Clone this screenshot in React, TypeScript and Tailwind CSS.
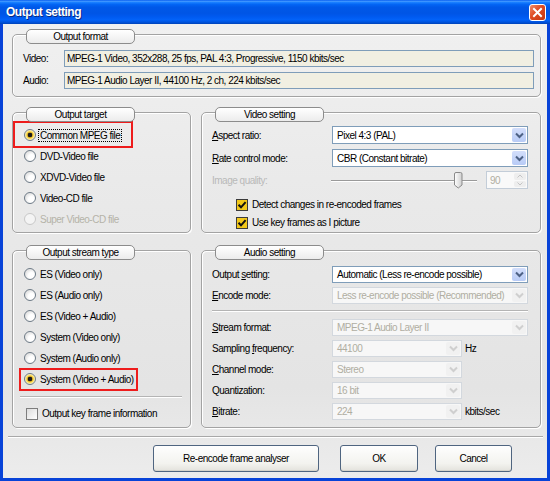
import React from "react";

function Tab({ title }: { title: string }) {
  return (
    <div className="relative z-10 ml-[14px] flex h-[15px] w-[109px] items-center justify-center rounded-[5px] border border-[#8c8c8c] bg-[linear-gradient(180deg,#ffffff,#ececec)] text-black">
      {title}
    </div>
  );
}

function Group({ title, boxClass, children }: { title: string; boxClass: string; children: React.ReactNode }) {
  return (
    <div className="flex flex-col">
      <Tab title={title} />
      <div className={"-mt-[10px] rounded-[5px] border border-[#a3a3a3] shadow-[inset_1px_1px_0_#ffffff,1px_1px_0_#ffffff] " + boxClass}>
        {children}
      </div>
    </div>
  );
}

function Radio({ checked, disabled }: { checked?: boolean; disabled?: boolean }) {
  if (checked) {
    return (
      <span className="h-[12px] w-[12px] shrink-0 rounded-full border border-[#6d7a86] bg-[radial-gradient(circle,#1b1b1b_0,#1b1b1b_2px,#e0b020_2.6px,#f8dc60_3.6px,#fffbe6_5.5px)]" />
    );
  }
  return (
    <span
      className={
        "h-[12px] w-[12px] shrink-0 rounded-full border " +
        (disabled
          ? "border-[#c8c8c8] bg-[#f4f4f4]"
          : "border-[#6d7a86] bg-[radial-gradient(circle_at_65%_65%,#ffffff_0,#ffffff_3px,#e6e6e6_6px)]")
      }
    />
  );
}

function RadioRow({ label, checked, disabled, focus, children }: { label: string; checked?: boolean; disabled?: boolean; focus?: boolean; children?: React.ReactNode }) {
  return (
    <div className="relative flex h-[16px] items-center">
      <Radio checked={checked} disabled={disabled} />
      <span
        className={
          "ml-[2px] px-[1px] leading-[11px] " +
          (focus ? "border border-dotted border-black " : "border border-transparent ") +
          (disabled ? "text-[#b5b3a8]" : "text-black")
        }
      >
        {label}
      </span>
      {children}
    </div>
  );
}

function CheckBox({ checked }: { checked?: boolean }) {
  if (checked) {
    return (
      <span className="flex h-[12px] w-[12px] shrink-0 items-center justify-center border border-[#3b3b3b] bg-[#f2c81a]">
        <svg width="10" height="10" viewBox="0 0 10 10">
          <path d="M1.5 4.8 L4 7.3 L8.6 2.2" fill="none" stroke="#111" strokeWidth="2" />
        </svg>
      </span>
    );
  }
  return <span className="h-[12px] w-[12px] shrink-0 border border-[#7d7d7d] bg-[linear-gradient(135deg,#dcdcdc,#ffffff)]" />;
}

function Chevron({ color }: { color: string }) {
  return (
    <svg width="9" height="7" viewBox="0 0 9 7">
      <path d="M1 1.5 L4.5 5 L8 1.5" fill="none" stroke={color} strokeWidth="2" />
    </svg>
  );
}

function Combo({ value, wClass, hClass, disabled }: { value: string; wClass: string; hClass: string; disabled?: boolean }) {
  return (
    <div
      className={
        "flex shrink-0 items-stretch border p-[1px] " +
        wClass +
        " " +
        hClass +
        (disabled ? " border-[#d3d8de] bg-[#f7f7f7] text-[#b0aea2]" : " border-[#7f9db9] bg-white text-black")
      }
    >
      <span className="flex flex-1 items-center pl-[3px] whitespace-nowrap">{value}</span>
      <span
        className={
          "flex w-[14px] items-center justify-center rounded-[2px] " +
          (disabled ? "bg-[#f1f1f1]" : "bg-[linear-gradient(180deg,#d3defb,#b8cbf6)]")
        }
      >
        <Chevron color={disabled ? "#cfcfcf" : "#4d6185"} />
      </span>
    </div>
  );
}

function U({ children }: { children: React.ReactNode }) {
  return <span className="underline underline-offset-[1px]">{children}</span>;
}

function Field({ value }: { value: string }) {
  return (
    <div className="flex h-[17px] flex-1 items-center border border-[#7f9db9] bg-[#f1efe2] pl-[2px] whitespace-nowrap text-black">
      {value}
    </div>
  );
}

function Button({ label, wClass }: { label: string; wClass: string }) {
  return (
    <div
      className={
        "flex h-[27px] items-center justify-center rounded-[3px] border border-[#4f6580] bg-[linear-gradient(180deg,#fefefe,#f3f3ef_70%,#e3e2dc)] text-black shadow-[inset_0_-1px_0_#d6d4cc] " +
        wClass
      }
    >
      {label}
    </div>
  );
}

export default function App() {
  return (
    <div className="flex h-[481px] w-[550px] flex-col overflow-hidden bg-[#0843d8] font-['Liberation_Sans',Arial,sans-serif] text-[10px] tracking-[-0.5px]">
      {/* Title bar */}
      <div className="flex h-[24px] shrink-0 items-center bg-[linear-gradient(180deg,#0a5ff0_0%,#3d95ff_6%,#1a80ff_10%,#0366f5_18%,#0058e8_30%,#0055e5_55%,#005af0_70%,#0262f8_82%,#0054df_92%,#0042b8_100%)] pl-[6px] pr-[4px]">
        <span className="text-[12px] font-bold tracking-[-0.5px] text-white [text-shadow:1px_1px_0_#0a2a80]">Output setting</span>
        <div className="ml-auto flex h-[17px] w-[17px] items-center justify-center rounded-[3px] border border-white bg-[linear-gradient(135deg,#f08c6a,#de4b22_45%,#c4360f)]">
          <svg width="11" height="11" viewBox="0 0 11 11">
            <path d="M2 2 L9 9 M9 2 L2 9" stroke="#ffffff" strokeWidth="2" strokeLinecap="square" />
          </svg>
        </div>
      </div>

      {/* Body */}
      <div className="mx-[3px] mb-[3px] flex flex-1 flex-col bg-[linear-gradient(180deg,#f0f0f0,#e9e9e9_40%,#e4e4e4_80%,#ececec)] pl-[9px] pr-[6px] pt-[5px]">
        <div className="w-[529px]">
          <Group title="Output format" boxClass="h-[63px] pl-[10px] pr-[6px] pt-[15px]">
            <div className="flex flex-col gap-[5px]">
              <div className="flex items-center">
                <span className="w-[41px] text-black">Video:</span>
                <Field value="MPEG-1 Video, 352x288, 25 fps, PAL 4:3, Progressive, 1150 kbits/sec" />
              </div>
              <div className="flex items-center">
                <span className="w-[41px] text-black">Audio:</span>
                <Field value="MPEG-1 Audio Layer II, 44100 Hz, 2 ch, 224 kbits/sec" />
              </div>
            </div>
          </Group>
        </div>

        {/* Row 1 */}
        <div className="mt-[10px] flex w-[529px] gap-[10px]">
          <div className="w-[179px]">
            <Group title="Output target" boxClass="h-[121px] pl-[11px] pt-[14px]">
              <div className="flex flex-col gap-[5px]">
                <RadioRow label="Common MPEG file" checked focus>
                  <span className="absolute left-[-11px] top-[-6px] h-[27px] w-[120px] border-2 border-[#ee1c1c]" />
                </RadioRow>
                <RadioRow label="DVD-Video file" />
                <RadioRow label="XDVD-Video file" />
                <RadioRow label="Video-CD file" />
                <RadioRow label="Super Video-CD file" disabled />
              </div>
            </Group>
          </div>
          <div className="w-[340px]">
            <Group title="Video setting" boxClass="h-[121px] pl-[10px] pr-[12px] pt-[13px]">
              <div className="flex flex-col">
                <div className="flex h-[18px] items-center">
                  <span className="w-[120px] text-black">
                    <U>A</U>spect ratio:
                  </span>
                  <Combo value="Pixel 4:3 (PAL)" wClass="w-[196px]" hClass="h-[18px]" />
                </div>
                <div className="mt-[5px] flex h-[18px] items-center">
                  <span className="w-[120px] text-black">
                    <U>R</U>ate control mode:
                  </span>
                  <Combo value="CBR (Constant bitrate)" wClass="w-[196px]" hClass="h-[18px]" />
                </div>
                <div className="mt-[4px] flex h-[18px] items-center">
                  <span className="w-[120px] text-[#b9b9b9]">Image quality:</span>
                  <svg width="146" height="18" viewBox="0 0 146 18" className="shrink-0">
                    <line x1="0" y1="9.5" x2="146" y2="9.5" stroke="#9a9a9a" strokeWidth="1" />
                    <line x1="0" y1="10.5" x2="146" y2="10.5" stroke="#ffffff" strokeWidth="1" />
                    <defs>
                      <linearGradient id="th" x1="0" x2="1" y1="0" y2="0">
                        <stop offset="0" stopColor="#ffffff" />
                        <stop offset="1" stopColor="#cfcfcf" />
                      </linearGradient>
                    </defs>
                    <path d="M123.5 3 Q123.5 1.5 125 1.5 L129.5 1.5 Q131 1.5 131 3 L131 14 L127.25 17 L123.5 14 Z" fill="url(#th)" stroke="#8a8a8a" strokeWidth="1" />
                  </svg>
                  <div className="ml-[9px] flex h-[18px] w-[42px] shrink-0 items-stretch border border-[#c3cdd8] bg-[#f9f9f9] p-[1px]">
                    <span className="flex flex-1 items-center pl-[2px] text-[#b0aea2]">90</span>
                    <span className="flex w-[12px] flex-col gap-[1px]">
                      <span className="flex flex-1 items-center justify-center rounded-[2px] bg-[#eeeeee]">
                        <svg width="6" height="4" viewBox="0 0 6 4">
                          <path d="M0.5 3.5 L3 1 L5.5 3.5" fill="none" stroke="#c4c4c4" strokeWidth="1" />
                        </svg>
                      </span>
                      <span className="flex flex-1 items-center justify-center rounded-[2px] bg-[#eeeeee]">
                        <svg width="6" height="4" viewBox="0 0 6 4">
                          <path d="M0.5 0.5 L3 3 L5.5 0.5" fill="none" stroke="#c4c4c4" strokeWidth="1" />
                        </svg>
                      </span>
                    </span>
                  </div>
                </div>
                <div className="mt-[9px] flex h-[13px] items-center pl-[24px]">
                  <CheckBox checked />
                  <span className="ml-[4px] text-black">Detect changes in re-encoded frames</span>
                </div>
                <div className="mt-[5px] flex h-[13px] items-center pl-[24px]">
                  <CheckBox checked />
                  <span className="ml-[4px] text-black">Use key frames as I picture</span>
                </div>
              </div>
            </Group>
          </div>
        </div>

        {/* Row 2 */}
        <div className="mt-[12px] flex w-[529px] gap-[10px]">
          <div className="w-[179px]">
            <Group title="Output stream type" boxClass="h-[178px] pl-[11px] pr-[8px] pt-[15px]">
              <div className="flex flex-col gap-[5px]">
                <RadioRow label="ES (Video only)" />
                <RadioRow label="ES (Audio only)" />
                <RadioRow label="ES (Video + Audio)" />
                <RadioRow label="System (Video only)" />
                <RadioRow label="System (Audio only)" />
                <RadioRow label="System (Video + Audio)" checked>
                  <span className="absolute left-[-5px] top-[-3px] h-[23px] w-[119px] border-2 border-[#ee1c1c]" />
                </RadioRow>
              </div>
              <div className="-ml-[4px] mt-[9px] border-t border-b border-t-[#b4b4b4] border-b-white" />
              <div className="mt-[9px] flex h-[13px] items-center pl-[2px]">
                <CheckBox />
                <span className="ml-[4px] text-black">Output key frame information</span>
              </div>
            </Group>
          </div>
          <div className="w-[340px]">
            <Group title="Audio setting" boxClass="h-[178px] pl-[10px] pr-[12px] pt-[15px]">
              <div className="flex flex-col gap-[4px]">
                <div className="flex h-[17px] items-center">
                  <span className="w-[120px] text-black">
                    Output <U>s</U>etting:
                  </span>
                  <Combo value="Automatic (Less re-encode possible)" wClass="w-[196px]" hClass="h-[17px]" />
                </div>
                <div className="flex h-[17px] items-center">
                  <span className="w-[120px] text-black">
                    <U>E</U>ncode mode:
                  </span>
                  <Combo value="Less re-encode possible (Recommended)" wClass="w-[196px]" hClass="h-[17px]" disabled />
                </div>
              </div>
              <div className="mt-[6px] border-t border-b border-t-[#b4b4b4] border-b-white" />
              <div className="mt-[7px] flex flex-col gap-[4px]">
                <div className="flex h-[17px] items-center">
                  <span className="w-[120px] text-black">
                    <U>S</U>tream format:
                  </span>
                  <Combo value="MPEG-1 Audio Layer II" wClass="w-[196px]" hClass="h-[17px]" disabled />
                </div>
                <div className="flex h-[17px] items-center">
                  <span className="w-[120px] text-black">
                    Sampling <U>f</U>requency:
                  </span>
                  <Combo value="44100" wClass="w-[130px]" hClass="h-[17px]" disabled />
                  <span className="ml-[3px] text-black">Hz</span>
                </div>
                <div className="flex h-[17px] items-center">
                  <span className="w-[120px] text-black">
                    <U>C</U>hannel mode:
                  </span>
                  <Combo value="Stereo" wClass="w-[130px]" hClass="h-[17px]" disabled />
                </div>
                <div className="flex h-[17px] items-center">
                  <span className="w-[120px] text-black">Quantization:</span>
                  <Combo value="16 bit" wClass="w-[130px]" hClass="h-[17px]" disabled />
                </div>
                <div className="flex h-[17px] items-center">
                  <span className="w-[120px] text-black">
                    <U>B</U>itrate:
                  </span>
                  <Combo value="224" wClass="w-[130px]" hClass="h-[17px]" disabled />
                  <span className="ml-[3px] text-black">kbits/sec</span>
                </div>
              </div>
            </Group>
          </div>
        </div>

        {/* Bottom separator */}
        <div className="-ml-[4px] mt-[8px] w-[535px] border-t border-b border-t-[#a8a8a8] border-b-white" />

        {/* Buttons */}
        <div className="mt-[7px] flex pl-[141px]">
          <Button label="Re-encode frame analyser" wClass="w-[166px]" />
          <Button label="OK" wClass="ml-[21px] w-[78px]" />
          <Button label="Cancel" wClass="ml-[17px] w-[77px]" />
        </div>
      </div>
    </div>
  );
}
